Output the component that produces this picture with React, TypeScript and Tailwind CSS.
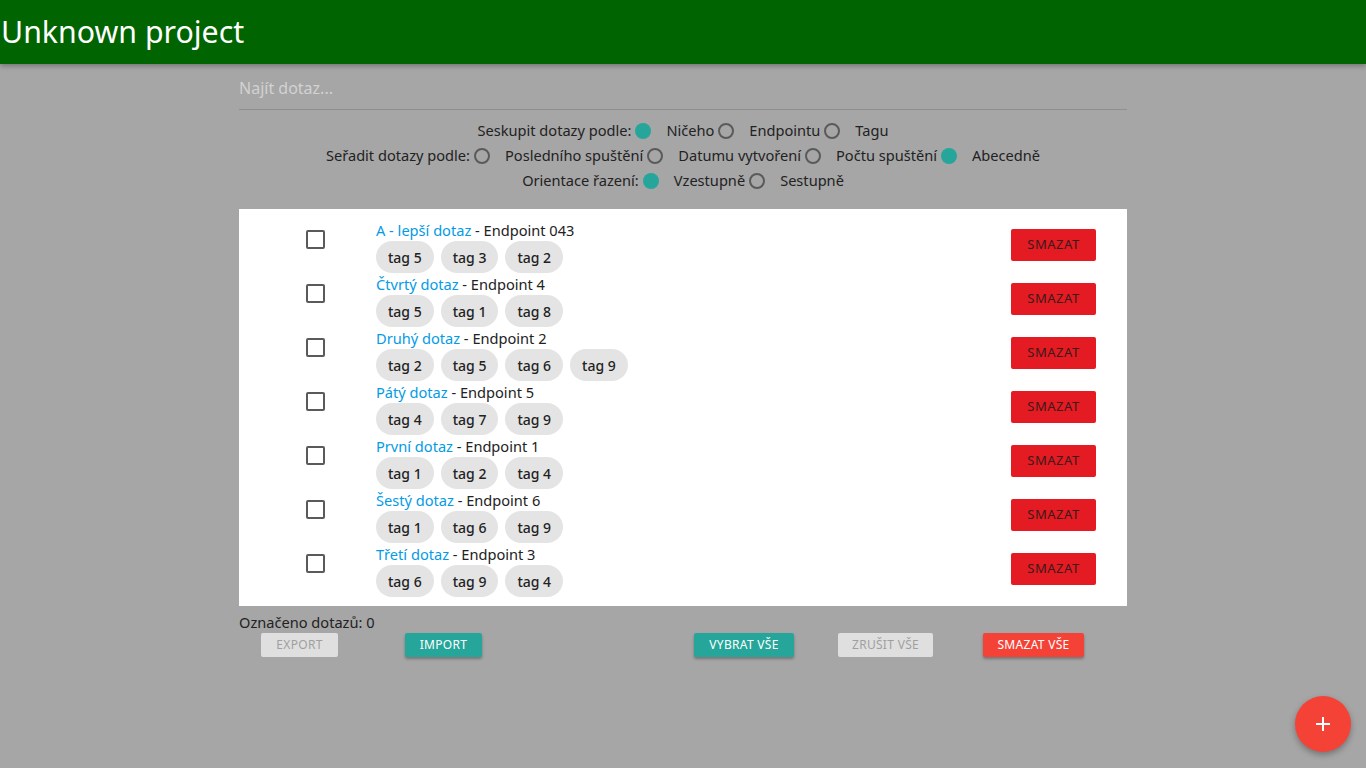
import React from "react";

const rows: { name: string; endpoint: string; tags: string[] }[] = [
  { name: "A - lepší dotaz", endpoint: "Endpoint 043", tags: ["tag 5", "tag 3", "tag 2"] },
  { name: "Čtvrtý dotaz", endpoint: "Endpoint 4", tags: ["tag 5", "tag 1", "tag 8"] },
  { name: "Druhý dotaz", endpoint: "Endpoint 2", tags: ["tag 2", "tag 5", "tag 6", "tag 9"] },
  { name: "Pátý dotaz", endpoint: "Endpoint 5", tags: ["tag 4", "tag 7", "tag 9"] },
  { name: "První dotaz", endpoint: "Endpoint 1", tags: ["tag 1", "tag 2", "tag 4"] },
  { name: "Šestý dotaz", endpoint: "Endpoint 6", tags: ["tag 1", "tag 6", "tag 9"] },
  { name: "Třetí dotaz", endpoint: "Endpoint 3", tags: ["tag 6", "tag 9", "tag 4"] },
];

function Radio({ on }: { on: boolean }) {
  return on ? (
    <span className="ml-1 mr-[15px] inline-block h-4 w-4 shrink-0 rounded-full bg-[#26a69a]" />
  ) : (
    <span className="ml-1 mr-[15px] inline-block h-4 w-4 shrink-0 rounded-full border-2 border-[#5a5a5a]" />
  );
}

function RadioRow({ label, options, selected }: { label: string; options: string[]; selected: number }) {
  return (
    <div className="flex h-[25px] items-center justify-center text-[14.6px] text-[#222]">
      <span>{label}</span>
      {options.map((o, i) => (
        <React.Fragment key={o}>
          <Radio on={i === selected} />
          <span>{o}</span>
        </React.Fragment>
      ))}
    </div>
  );
}

export default function App() {
  return (
    <div
      className="relative min-h-[768px] w-full bg-[#a6a6a6]"
      style={{ fontFamily: '"Noto Sans", "Open Sans", sans-serif' }}
    >
      <header className="flex h-16 items-center bg-[#006400] shadow-[0_2px_5px_rgba(0,0,0,0.3)]">
        <h1 className="pl-[1px] text-[30.3px] leading-none text-white">Unknown project</h1>
      </header>

      <div className="mx-auto w-[888px]">
        <div className="mt-[12px] h-[34px] border-b border-[#8f8f8f] text-[16px] leading-[24px] text-[#d2d2d2]">
          Najít dotaz...
        </div>
        <div className="mt-[8px]">
          <RadioRow label="Seskupit dotazy podle:" options={["Ničeho", "Endpointu", "Tagu"]} selected={0} />
          <RadioRow
            label="Seřadit dotazy podle:"
            options={["Posledního spuštění", "Datumu vytvoření", "Počtu spuštění", "Abecedně"]}
            selected={3}
          />
          <RadioRow label="Orientace řazení:" options={["Vzestupně", "Sestupně"]} selected={0} />
        </div>

        <div className="mt-[16px] bg-white pb-[9px] pt-[10px]">
          {rows.map((r) => (
            <div key={r.name} className="flex h-[54px] items-start">
              <div className="ml-[67px] mt-[11px] h-[19px] w-[19px] rounded-[2px] border-2 border-[#5a5a5a]" />
              <div className="ml-[51px] flex-1">
                <div className="h-[22px] text-[14.6px] leading-[22px]">
                  <span className="text-[#039be5]">{r.name}</span>
                  <span className="text-[#222]"> - {r.endpoint}</span>
                </div>
                <div className="flex gap-[7px]">
                  {r.tags.map((t, i) => (
                    <span
                      key={i}
                      className="flex h-8 items-center rounded-2xl bg-[#e4e4e4] px-[12px] text-[14px] font-medium text-[#222]"
                    >
                      {t}
                    </span>
                  ))}
                </div>
              </div>
              <button className="mr-[31px] mt-[10px] h-8 w-[85px] rounded-[2px] bg-[#e41b23] text-[13px] uppercase tracking-[0.5px] text-[#3a1a1a]">
                Smazat
              </button>
            </div>
          ))}
        </div>

        <div className="mt-[6px] text-[14.6px] leading-[20px] text-[#222]">Označeno dotazů: 0</div>
        <div className="mt-[1px] flex items-center">
          <button className="ml-[22px] h-6 w-[77px] rounded-[2px] bg-[#dfdfdf] text-[12px] uppercase tracking-[0.3px] text-[#9f9f9f]">
            Export
          </button>
          <button className="ml-[67px] h-6 w-[77px] rounded-[2px] bg-[#26a69a] text-[12px] uppercase tracking-[0.3px] text-white shadow-[0_2px_3px_rgba(0,0,0,0.3)]">
            Import
          </button>
          <button className="ml-[212px] h-6 w-[100px] rounded-[2px] bg-[#26a69a] text-[12px] uppercase tracking-[0.3px] text-white shadow-[0_2px_3px_rgba(0,0,0,0.3)]">
            Vybrat vše
          </button>
          <button className="ml-[44px] h-6 w-[95px] rounded-[2px] bg-[#dfdfdf] text-[12px] uppercase tracking-[0.3px] text-[#9f9f9f]">
            Zrušit vše
          </button>
          <button className="ml-[50px] h-6 w-[101px] rounded-[2px] bg-[#f44336] text-[12px] uppercase tracking-[0.3px] text-white shadow-[0_2px_3px_rgba(0,0,0,0.3)]">
            Smazat vše
          </button>
        </div>
      </div>

      <button className="absolute bottom-[16px] right-[15px] flex h-14 w-14 items-center justify-center rounded-full bg-[#f44336] shadow-[0_3px_6px_rgba(0,0,0,0.3)]">
        <svg width="16" height="16" viewBox="0 0 16 16">
          <path d="M8 1v14M1 8h14" stroke="white" strokeWidth="2" />
        </svg>
      </button>
    </div>
  );
}
